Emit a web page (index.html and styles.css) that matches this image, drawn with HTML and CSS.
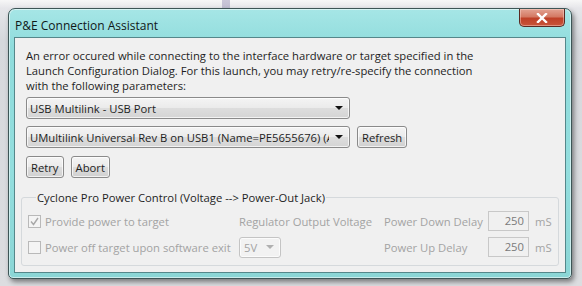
FILE: index.html
```html
<!DOCTYPE html>
<html lang="en">
<head>
    <meta charset="UTF-8">
    <title>P&amp;E Connection Assistant</title>
    <link rel="stylesheet" href="styles.css">
</head>
<body>
    <div class="window">
        <div class="titlebar">
            <span class="title">P&amp;E Connection Assistant</span>
            <button class="btn-close">
                <svg width="12" height="10" viewBox="0 0 12 10">
                    <path d="M2 1 L10 9 M10 1 L2 9" stroke="#fff" stroke-width="2.4" stroke-linecap="square"/>
                </svg>
            </button>
        </div>
        <div class="client">
            <p class="message">An error occured while connecting to the interface hardware or target specified in the Launch Configuration Dialog. For this launch, you may retry/re-specify the connection with the following parameters:</p>

            <div class="combo combo-wide">
                <span class="combo-text">USB Multilink - USB Port</span>
                <span class="arrow"></span>
            </div>

            <div class="row">
                <div class="combo combo-wide">
                    <span class="combo-text">UMultilink Universal Rev B on USB1 (Name=PE5655676) (A</span>
                    <span class="arrow"></span>
                </div>
                <button class="btn">Refresh</button>
            </div>

            <div class="row actions">
                <button class="btn">Retry</button>
                <button class="btn">Abort</button>
            </div>

            <fieldset class="group">
                <legend>Cyclone Pro Power Control (Voltage --&gt; Power-Out Jack)</legend>
                <div class="power-grid">
                    <label class="check">
                        <span class="box">
                            <svg width="9" height="9" viewBox="0 0 9 9">
                                <path d="M1 4.5 L3.5 7.5 L8 1" fill="none" stroke="#a8a8a8" stroke-width="1.4"/>
                            </svg>
                        </span>
                        Provide power to target
                    </label>
                    <span class="muted">Regulator Output Voltage</span>
                    <span class="muted">Power Down Delay</span>
                    <span class="field">250</span>
                    <span class="muted unit">mS</span>

                    <label class="check">
                        <span class="box"></span>
                        Power off target upon software exit
                    </label>
                    <div class="combo combo-small">
                        <span class="combo-text">5V</span>
                        <span class="arrow arrow-muted"></span>
                    </div>
                    <span class="muted">Power Up Delay</span>
                    <span class="field">250</span>
                    <span class="muted unit">mS</span>
                </div>
            </fieldset>
        </div>
    </div>
</body>
</html>
```

FILE: styles.css
```css
* {
    margin: 0;
    padding: 0;
    box-sizing: border-box;
}

body {
    width: 582px;
    height: 286px;
    overflow: hidden;
    font-family: 'Open Sans', 'Noto Sans', sans-serif;
    font-size: 11.25px;
    color: #1e1e1e;
    background:
        linear-gradient(90deg, transparent 222px, rgba(120, 110, 160, 0.35) 222px, rgba(120, 110, 160, 0.35) 230px, transparent 230px) top / 100% 8px no-repeat,
        linear-gradient(180deg, #f7f7f7 0px, #e6e6ea 8px, #d6d8dc 40px, #dcdde0 100%);
    padding: 8px 0 0 8px;
}

.window {
    width: 564px;
    height: 271px;
    border: 1px solid #3d5556;
    border-radius: 7px 7px 5px 5px;
    background: linear-gradient(180deg, #a6e6e6 0%, #8fdcdc 14%, #93dede 60%, #8bd6d6 100%);
    box-shadow: 2px 3px 5px rgba(0, 0, 0, 0.45), inset 0 0 0 1px rgba(255, 255, 255, 0.55);
    display: flex;
    flex-direction: column;
    padding: 0 5px 5px 5px;
}

.titlebar {
    height: 28px;
    display: flex;
    justify-content: space-between;
    align-items: flex-start;
}

.title {
    font-size: 12px;
    color: #101818;
    padding: 8px 0 0 1px;
}

.btn-close {
    width: 46px;
    height: 18px;
    border: 1px solid #5a2a22;
    border-top: none;
    border-radius: 0 0 5px 5px;
    background: linear-gradient(180deg, #e3a393 0%, #d47a64 45%, #bf4128 55%, #c8553a 100%);
    box-shadow: inset 0 0 0 1px rgba(255, 220, 210, 0.45);
    display: flex;
    justify-content: center;
    align-items: center;
    margin-right: 1px;
}

.client {
    flex: 1;
    background: #f0f0f0;
    border: 1px solid #55878a;
    padding: 10px 11px 0 11px;
    display: flex;
    flex-direction: column;
    align-items: flex-start;
}

.message {
    line-height: 15px;
    width: 460px;
    margin-bottom: 4px;
}

.combo {
    height: 22px;
    border: 1px solid #8a8a8a;
    border-radius: 3px;
    background: linear-gradient(180deg, #f4f4f4 0%, #ebebeb 48%, #dddddd 52%, #d4d4d4 100%);
    display: flex;
    align-items: center;
    padding: 0 6px 0 3px;
    box-shadow: inset 0 0 0 1px rgba(255, 255, 255, 0.7);
}

.combo-wide {
    width: 324px;
}

.combo-text {
    flex: 1;
    min-width: 0;
    white-space: nowrap;
    overflow: hidden;
}

.arrow {
    width: 0;
    height: 0;
    border-left: 4px solid transparent;
    border-right: 4px solid transparent;
    border-top: 4px solid #111;
    margin-left: 6px;
}

.arrow-muted {
    border-top-color: #b0b0b0;
}

.row {
    display: flex;
    gap: 7px;
    margin-top: 7px;
}

.actions {
    margin-top: 8px;
}

.btn {
    height: 22px;
    padding: 0 4px;
    font: inherit;
    color: #1e1e1e;
    border: 1px solid #8a8a8a;
    border-radius: 3px;
    background: linear-gradient(180deg, #f4f4f4 0%, #ebebeb 48%, #dddddd 52%, #d0d0d0 100%);
    box-shadow: inset 0 0 0 1px rgba(255, 255, 255, 0.7);
}

.group {
    width: 538px;
    margin: 12px 0 0 -5px;
    border: 1px solid #d5d9dc;
    border-radius: 3px;
    padding: 6px 0 8px 6px;
}

.group legend {
    margin-left: 8px;
    padding: 0 1px;
    color: #1e1e1e;
}

.power-grid {
    display: grid;
    grid-template-columns: 211px 145px 104px 41px auto;
    grid-auto-rows: 20px;
    row-gap: 6px;
    align-items: center;
    color: #a3a3a3;
}

.check {
    display: flex;
    align-items: center;
    gap: 4px;
}

.box {
    width: 13px;
    height: 13px;
    border: 1px solid #b9b9b9;
    background: #f4f4f4;
    display: flex;
    justify-content: center;
    align-items: center;
}

.combo-small {
    width: 42px;
    height: 21px;
    border-color: #c4c4c4;
    background: #f2f2f2;
    color: #a3a3a3;
    padding: 0 6px 0 4px;
}

.field {
    height: 20px;
    border: 1px solid #c8c8c8;
    background: #f0f0f0;
    text-align: right;
    padding: 0 4px;
    line-height: 18px;
    color: #7a7a7a;
}

.unit {
    margin-left: 6px;
}
```
